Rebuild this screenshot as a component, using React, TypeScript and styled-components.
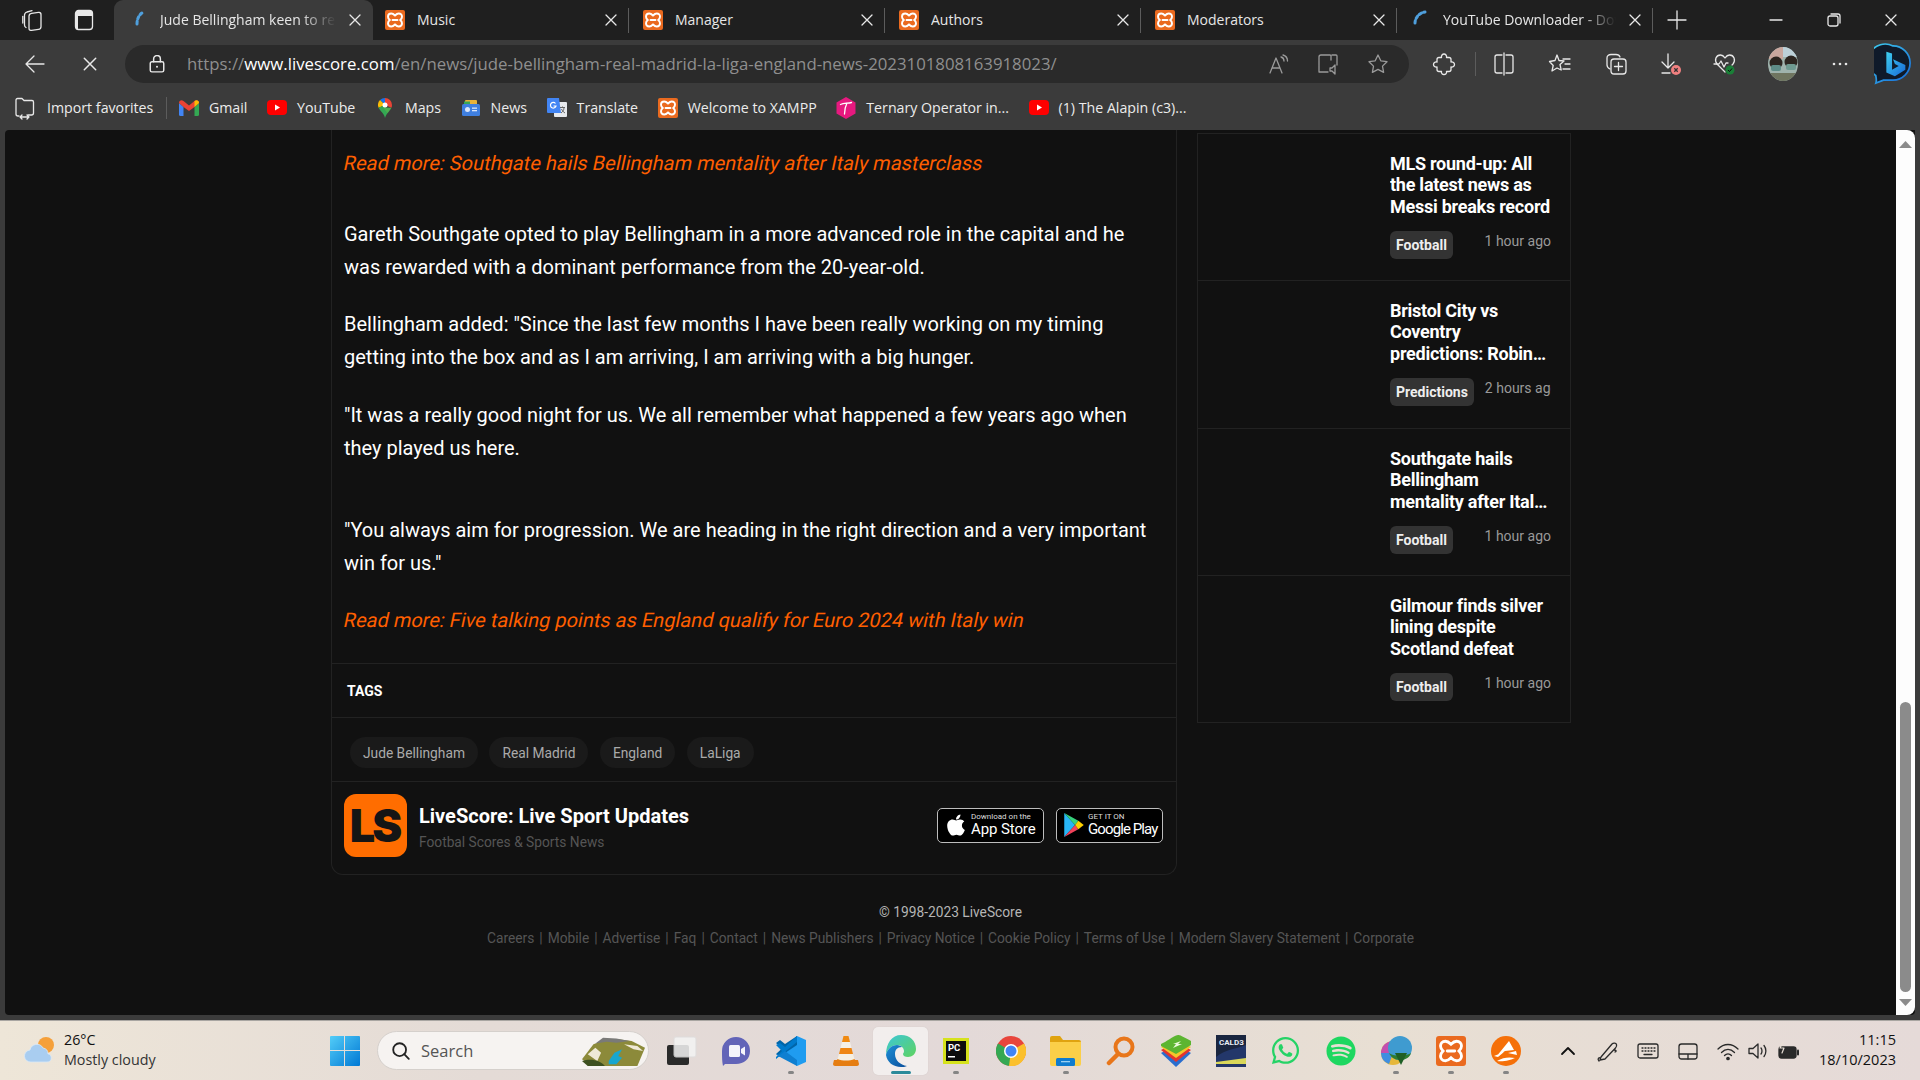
import React from "react";
import styled, { createGlobalStyle, css } from "styled-components";
import { FaApple, FaWhatsapp, FaSpotify } from "react-icons/fa";

const UI = `"Open Sans", "Noto Sans", sans-serif`;
const WEB = `Roboto, "Liberation Sans", sans-serif`;

const Global = createGlobalStyle`
  html, body { margin: 0; padding: 0; height: 100%; overflow: hidden; background: #111; }
  #root { height: 100%; }
  * { box-sizing: border-box; }
  svg { display: block; }
`;

const Screen = styled.div`
  height: 1080px; width: 1920px; display: flex; flex-direction: column; overflow: hidden;
`;

/* ---------- tab strip ---------- */
const TabStrip = styled.div`
  height: 40px; flex: none; display: flex; align-items: stretch; background: #1f1f1f;
  font: 400 14px ${UI}; color: #e6e6e6;
`;
const Leading = styled.div`
  width: 114px; flex: none; display: flex; align-items: center; gap: 28px; padding-left: 20px;
`;
const Tab = styled.div<{ $active?: boolean; $first?: boolean; $w: number }>`
  width: ${(p) => p.$w}px; flex: none; display: flex; align-items: center; gap: 12px;
  padding: 0 11px 0 ${(p) => (p.$first ? 12 : 14)}px; position: relative;
  ${(p) =>
    p.$active
      ? css`background: #3b3b3b; border-radius: 9px 9px 0 0;`
      : css`&::after { content: ""; position: absolute; right: 0; top: 8px; bottom: 7px; width: 1px; background: #5c5c5c; }`}
`;
const TabTitle = styled.span<{ $fade?: boolean }>`
  flex: 1; min-width: 0; overflow: hidden; white-space: nowrap; margin-top: -2px;
  ${(p) => p.$fade && css`-webkit-mask-image: linear-gradient(90deg, #000 80%, transparent 100%); mask-image: linear-gradient(90deg, #000 80%, transparent 100%);`}
`;
const Fav = styled.span`
  width: 20px; height: 20px; flex: none; display: flex; align-items: center; justify-content: center;
`;
const NewTab = styled.div`
  margin-left: 14px; width: 20px; flex: none; display: flex; align-items: center; justify-content: center;
`;
const WindowControls = styled.div`
  margin-left: auto; display: flex; align-items: stretch;
`;
const WinBtn = styled.div`
  width: 57.5px; display: flex; align-items: center; justify-content: center;
`;

/* ---------- toolbar ---------- */
const Toolbar = styled.div`
  height: 45px; flex: none; display: flex; align-items: center; background: #3b3b3b;
  padding: 3px 0 0 19px;
`;
const NavBtn = styled.div`
  width: 32px; height: 32px; flex: none; display: flex; align-items: center; justify-content: center;
  & + & { margin-left: 23px; }
`;
const Address = styled.div`
  margin-left: 19px; width: 1284px; height: 38px; flex: none; border-radius: 19px; background: #2a2a2a;
  display: flex; align-items: center; padding: 0 19px 0 23px;
`;
const Url = styled.div`
  margin: -2px 0 0 21px; flex: 1; font: 400 16.8px ${UI}; color: #8f8f8f; white-space: nowrap;
  strong { font-weight: 400; color: #fff; }
`;
const AddrTools = styled.div`
  display: flex; gap: 26px; align-items: center;
`;
const ToolRow = styled.div`
  flex: 1; display: flex; align-items: center; padding-left: 7px;
`;
const ToolSlot = styled.div<{ $w?: number }>`
  width: ${(p) => p.$w ?? 56}px; flex: none; display: flex; align-items: center; justify-content: center;
`;
const ToolSep = styled.div`
  width: 1px; height: 24px; background: #5c5c5c; margin-left: 3px; flex: none;
`;
const Avatar = styled.div`
  width: 30px; height: 34px; border-radius: 50%; overflow: hidden;
`;

/* ---------- bookmarks ---------- */
const BookmarkBar = styled.div`
  height: 45px; flex: none; display: flex; align-items: center; background: #3b3b3b;
  padding-left: 13px; font: 400 14.2px ${UI}; color: #ececec; white-space: nowrap;
`;
const Bookmark = styled.div`
  display: flex; align-items: center; gap: 10px; margin-right: 19.6px;
`;
const BarSep = styled.div`
  width: 1px; height: 22px; background: #5c5c5c; margin: 0 12px 0 -7px;
`;

/* ---------- page ---------- */
const Viewport = styled.div`
  flex: 1; min-height: 0; display: flex; background: #3b3b3b; padding: 0 5px 5px;
`;
const Page = styled.div`
  flex: 1; display: flex; background: #111; border-radius: 4px 0 4px 4px; overflow: hidden;
`;
const PageBody = styled.div`
  flex: 1; min-width: 0; display: flex; flex-direction: column; font-family: ${WEB};
`;
const Columns = styled.div`
  display: flex; align-items: flex-start; gap: 20px; padding-left: 326px;
`;
const Card = styled.article`
  width: 846px; flex: none; border: 1px solid #222; border-top: 0; border-radius: 0 0 12px 12px;
`;
const Prose = styled.div`
  padding: 17px 13px 26px 12px; color: #fff; font-size: 20px; line-height: 33px;
`;
const Para = styled.p<{ $gap?: number }>`
  margin: ${(p) => p.$gap ?? 24}px 0 0;
`;
const ReadMore = styled.p<{ $gap?: number }>`
  margin: ${(p) => p.$gap ?? 0}px 0 0; color: #ff5f00; transform: skewX(-12deg); transform-origin: left center;
`;
const TagsHead = styled.div`
  height: 55px; display: flex; align-items: center; padding-left: 15px;
  border-top: 1px solid #222; border-bottom: 1px solid #222;
  font-size: 14px; font-weight: 700; color: #fff;
`;
const TagRow = styled.div`
  height: 64px; display: flex; align-items: center; gap: 11.5px; padding: 6px 0 0 18px;
  border-bottom: 1px solid #222;
`;
const TagChip = styled.span`
  height: 31px; display: flex; align-items: center; padding: 0 13px; border-radius: 16px;
  background: #1a1a1a; color: #aaa; font-size: 13.75px;
`;
const AppBar = styled.div`
  height: 92px; display: flex; align-items: center; padding: 0 13px 5px 12px;
`;
const LsLogo = styled.div`
  width: 63px; height: 63px; flex: none; border-radius: 12px; background: #ff6d00; color: #151515;
  display: flex; align-items: center; justify-content: center;
  font: 900 45px/1 Inter, sans-serif; letter-spacing: -3px; padding-right: 2px;
`;
const AppText = styled.div`
  margin-left: 12px; flex: 1; display: flex; flex-direction: column; gap: 5px; padding-top: 4.5px;
`;
const AppName = styled.div`
  font-size: 20px; line-height: 24px; font-weight: 700; color: #fff;
`;
const AppSub = styled.div`
  font-size: 13.75px; line-height: 18px; color: #555;
`;
const Badge = styled.div`
  width: 107px; height: 35px; flex: none; margin-left: 12px; background: #000; border: 1px solid #bdbdbd;
  border-radius: 5px; display: flex; align-items: center; gap: 3px; padding: 0 0 2px 6px; color: #fff;
`;
const BadgeText = styled.div`
  display: flex; flex-direction: column; font-family: ${WEB};
`;
const BadgeSmall = styled.span`
  font-size: 8px; line-height: 9px; color: #ddd; white-space: nowrap;
`;
const BadgeBig = styled.span<{ $track: number }>`
  font-size: 15px; line-height: 16px; font-weight: 400; letter-spacing: ${(p) => p.$track}px; white-space: nowrap;
`;

const Sidebar = styled.aside`
  width: 374px; flex: none; margin-top: 3px; border: 1px solid #222;
`;
const SideItem = styled.div`
  height: 147px; display: flex; padding: 19px 19px 0 0;
  & + & { border-top: 1px solid #222; }
  &:first-child { height: 146px; }
  &:nth-child(2) { height: 148px; }
`;
const ThumbSpace = styled.div`
  width: 192px; flex: none;
`;
const SideText = styled.div`
  flex: 1; min-width: 0;
`;
const SideTitle = styled.h3`
  margin: 0; height: 63px; color: #fff; font-size: 18px; line-height: 21.3px; font-weight: 700; letter-spacing: -0.25px;
  display: -webkit-box; -webkit-line-clamp: 3; -webkit-box-orient: vertical; overflow: hidden;
`;
const MetaRow = styled.div`
  margin-top: 15.4px; display: flex; justify-content: space-between; align-items: flex-start; gap: 11px; overflow: hidden;
`;
const Category = styled.span`
  height: 28px; flex: none; display: flex; align-items: center; padding: 0 6px; border-radius: 6px;
  background: #333; color: #eee; font-size: 14px; font-weight: 700;
`;
const TimeAgo = styled.span`
  flex: none; color: #999; font-size: 14px; line-height: 20px; white-space: nowrap;
`;
const Footer = styled.footer`
  margin-top: 27px; display: flex; flex-direction: column; align-items: center; gap: 6px; font-size: 13.75px; line-height: 20px;
`;
const Copyright = styled.div`color: #b5b5b5;`;
const FootLinks = styled.div`
  color: #555; display: flex; gap: 5px;
`;

/* ---------- scrollbar ---------- */
const Scrollbar = styled.div`
  width: 19px; flex: none; display: flex; flex-direction: column; align-items: center; background: #fdfdfd;
  border-radius: 0 8px 8px 0; padding: 11px 0 9px;
`;
const ScrollTrack = styled.div`
  flex: 1; width: 100%; display: flex; flex-direction: column; align-items: center; justify-content: flex-end; padding-bottom: 7px;
`;
const ScrollThumb = styled.div`
  width: 11px; height: 290px; border-radius: 6px; background: #8b8b8b;
`;

/* ---------- taskbar ---------- */
const Taskbar = styled.div`
  height: 60px; flex: none; display: flex; align-items: center; border-top: 1px solid #a9a6a2;
  background: linear-gradient(90deg, #eee6d8 0%, #e4dbd6 25%, #e3d9d8 50%, #e8dfd3 72%, #e5dad8 100%);
  font-family: ${UI}; color: #222;
`;
const Weather = styled.div`
  width: 317px; flex: none; display: flex; align-items: center; gap: 8px; padding: 0 0 2px 24px;
`;
const WeatherText = styled.div`
  font-size: 14.3px; line-height: 20px; color: #333;
  div:first-child { color: #111; }
`;
const Slot = styled.div<{ $w?: number; $hi?: boolean }>`
  width: ${(p) => p.$w ?? 55}px; height: 48px; flex: none; position: relative; display: flex; align-items: center; justify-content: center;
  border-radius: 5px;
  ${(p) => p.$hi && css`background: rgba(255, 255, 255, 0.55); box-shadow: 0 0 1px rgba(0,0,0,.15);`}
`;
const Indicator = styled.span<{ $on?: boolean }>`
  position: absolute; bottom: 1px; left: 50%; transform: translateX(-50%); height: 3px; border-radius: 2px;
  width: ${(p) => (p.$on ? 20 : 6)}px; background: ${(p) => (p.$on ? "#2b8a9a" : "#858585")};
`;
const SearchBox = styled.div`
  width: 272px; height: 39px; flex: none; margin-left: 5px; border-radius: 20px; background: #f6f3f1; border: 1px solid #d5d0cc;
  display: flex; align-items: center; padding: 0 3px 0 12px; font-size: 16.5px; color: #555;
`;
const SearchLabel = styled.span`
  margin-left: 9px; flex: 1;
`;
const TaskIcons = styled.div`
  display: flex; align-items: center; margin-left: 4px;
`;
const Tray = styled.div`
  display: flex; align-items: center; margin-left: 15px;
`;
const TrayGap = styled.div`width: 5px; flex: none;`;
const Clock = styled.div`
  margin-left: auto; padding: 0 24px 2px 0; text-align: right; font-size: 14.5px; line-height: 20px; color: #111;
`;

/* ---------- icons ---------- */
const sw = { fill: "none", stroke: "#e8e8e8", strokeWidth: 1.3, strokeLinecap: "round" as const, strokeLinejoin: "round" as const };
const dim = { ...sw, stroke: "#9a9a9a" };
const I = ({ s = 20, children, v = 24 }: { s?: number; v?: number; children: React.ReactNode }) => (
  <svg width={s} height={s} viewBox={`0 0 ${v} ${v}`}>{children}</svg>
);
const Close = ({ s = 14 }: { s?: number }) => (
  <I s={s} v={14}><path d="M2 2l10 10M12 2L2 12" {...sw} /></I>
);
const Xampp = ({ s = 20 }: { s?: number }) => (
  <svg width={s} height={s} viewBox="0 0 20 20">
    <rect width="20" height="20" rx="2" fill="#ea6a1f" />
    <path d="M6.300 3.500c-2.200 0-3.300 1.500-3.300 3.200 0 1.300.7 2.300 1.700 3.300-1 1-1.700 2-1.700 3.300 0 1.700 1.100 3.200 3.300 3.200 1.300 0 2.400-.7 3.700-2 1.300 1.300 2.400 2 3.700 2 2.200 0 3.300-1.500 3.300-3.200 0-1.300-.7-2.300-1.700-3.300 1-1 1.700-2 1.700-3.300 0-1.700-1.100-3.200-3.300-3.200-1.300 0-2.400.7-3.700 2-1.300-1.300-2.400-2-3.700-2z" fill="none" stroke="#fff" strokeWidth="1.900" />
    <path d="M7.500 10h5" stroke="#fff" strokeWidth="1.900" strokeLinecap="round" />
  </svg>
);
const Spinner = ({ short }: { short?: boolean }) => (
  <svg width="20" height="20" viewBox="0 0 20 20">
    <path d={short ? "M7 15C7 10 9 6 12 4" : "M3 15C3 10 7 5 13 4"} transform={short ? "translate(2 -1)" : "translate(1 -2)"} fill="none" stroke="#4f9fdc" strokeWidth="3" strokeLinecap="round" strokeDasharray="2.500 2.400" />
  </svg>
);
const YtIcon = () => (
  <svg width="20" height="15" viewBox="0 0 20 15"><rect width="20" height="15" rx="4" fill="#f00" /><path d="M8 4.500l5 3-5 3z" fill="#fff" /></svg>
);
const Gmail = () => (
  <svg width="20" height="16" viewBox="0 0 20 16">
    <path d="M0 3v11.500A1.500 1.500 0 0 0 1.500 16H4.500V7z" fill="#4285f4" />
    <path d="M20 3v11.500a1.500 1.500 0 0 1-1.500 1.500H15.500V7z" fill="#34a853" />
    <path d="M0 3c0-2.500 2.500-3.500 4.500-2L10 5.500 15.500 1c2-1.500 4.500-.5 4.500 2l-4.500 4L10 11 4.500 7z" fill="#ea4335" />
    <path d="M15.500 1C17.500-.5 20 .5 20 3l-4.500 4z" fill="#fbbc04" />
  </svg>
);
const Maps = () => (
  <svg width="14" height="20" viewBox="0 0 14 20">
    <path d="M7 0a7 7 0 0 0-5 2.100L7 7z" fill="#1a73e8" />
    <path d="M7 0a7 7 0 0 1 7 7c0 1-.2 1.900-.6 2.700L7 7z" fill="#ea4335" />
    <path d="M2 2.100A7 7 0 0 0 .6 9.700L7 7z" fill="#fbbc04" />
    <path d="M.6 9.700C2 13 6 15 7 20c.5-2 1.400-3.400 2.500-4.800L7 7z" fill="#34a853" />
    <path d="M13.400 9.700C12.500 11.700 10.800 13.500 9.500 15.200L5 9.500z" fill="#4caf50" />
    <circle cx="7" cy="7" r="2.500" fill="#fff" />
  </svg>
);
const News = () => (
  <svg width="18" height="18" viewBox="0 0 18 18">
    <rect x="3" y="1" width="12" height="6" rx="1" fill="#e8b23a" />
    <rect x="2" y="2.500" width="6" height="5" fill="#3aa757" />
    <rect x="0" y="5" width="18" height="12" rx="1.500" fill="#3f7fe0" />
    <rect x="3" y="8" width="5" height="5" rx="2.500" fill="#dbe7fb" />
    <rect x="10" y="8.500" width="5" height="1.300" fill="#dbe7fb" />
    <rect x="10" y="11" width="5" height="1.300" fill="#dbe7fb" />
  </svg>
);
const Translate = () => (
  <svg width="20" height="20" viewBox="0 0 20 20">
    <rect x="7" y="4" width="13" height="15" rx="1" fill="#e8eaed" />
    <path d="M1 0h11l2 15H1a1 1 0 0 1-1-1V1a1 1 0 0 1 1-1z" fill="#4285f4" />
    <path d="M13 9.500h5M15.500 8.500v1M14 15c2-1.500 3-3 3-5.500M14.500 11c.5 1.500 2 3 3.500 4" stroke="#666" strokeWidth="1" fill="none" />
    <path d="M8.500 5.500A2.800 2.800 0 1 0 9 8H6.500" fill="none" stroke="#fff" strokeWidth="1.200" />
  </svg>
);
const Ternary = () => (
  <svg width="20" height="22" viewBox="0 0 20 22">
    <path d="M10 0l9.500 5.500v11L10 22 .5 16.500v-11z" fill="#e6197f" />
    <path d="M4.500 7.500c3.500-1.500 7-1 11-2M11 6c-1.500 3-2.500 7-2.500 11" stroke="#fff" strokeWidth="1.300" fill="none" strokeLinecap="round" />
  </svg>
);

const WindowsLogo = () => (
  <svg width="30" height="30" viewBox="0 0 30 30">
    <defs><linearGradient id="w" x1="0" y1="0" x2="1" y2="1"><stop offset="0" stopColor="#53cdf8" /><stop offset="1" stopColor="#0078d4" /></linearGradient></defs>
    <path d="M0 1a1 1 0 0 1 1-1h13v14H0zM15 0h14a1 1 0 0 1 1 1v13H15zM0 15h14v15H1a1 1 0 0 1-1-1zM15 15h15v14a1 1 0 0 1-1 1H15z" fill="url(#w)" />
  </svg>
);
const TaskView = () => (
  <svg width="32" height="30" viewBox="0 0 32 30">
    <rect x="2" y="9" width="22" height="20" rx="2" fill="#2a2a2a" />
    <rect x="9" y="1" width="22" height="20" rx="2" fill="#f4f4f4" opacity=".85" stroke="#ddd" />
  </svg>
);
const Meet = () => (
  <svg width="30" height="32" viewBox="0 0 30 32">
    <path d="M15 2a14 14 0 0 1 14 14c0 8-6 13-14 13H4l-2 2c-1-4-1-9-1-15A14 14 0 0 1 15 2z" fill="#6264b8" />
    <rect x="8" y="10" width="11" height="12" rx="1.500" fill="#f4f4fb" />
    <path d="M20 14l4-2.500v9L20 18z" fill="#f4f4fb" />
  </svg>
);
const VsCode = () => (
  <svg width="30" height="30" viewBox="0 0 30 30">
    <path d="M21 0l9 4v22l-9 4-12-13z" fill="#1f9cf0" />
    <path d="M21 0v9L9 17l-5 4-4-3 6-5.500L0 7l4-3 5 4z" fill="#0065a9" />
    <path d="M0 23l21-17v-6L9 11 4 7 0 9l6 6-6 6z" fill="#007acc" />
    <path d="M0 18l4 3 17 9v-6L9 15 4 19z" fill="#0e7fd1" />
  </svg>
);
const Vlc = () => (
  <svg width="26" height="30" viewBox="0 0 26 30">
    <path d="M1 24l-1 4c0 1 1 2 2 2h22c1 0 2-1 2-2l-1-4z" fill="#e57d12" />
    <path d="M10.500 0h5l1.500 6h-8z" fill="#f08a12" />
    <path d="M9 6h8l1.500 6h-11z" fill="#f4f0e8" />
    <path d="M7.500 12h11l1.500 6H6z" fill="#ef8613" />
    <path d="M6 18h14l2 7H4z" fill="#f5efe3" />
    <path d="M4.500 23c5 2 12 2 17 0l1.500 3H3z" fill="#e77e10" />
  </svg>
);
const PyCharm = () => (
  <svg width="26" height="26" viewBox="0 0 26 26">
    <rect width="26" height="26" fill="#d6e21d" />
    <rect x="3" y="3" width="20" height="20" fill="#0d0d0d" />
    <text x="5" y="13" fontSize="9.500" fontWeight="700" fontFamily="Roboto, sans-serif" fill="#fff">PC</text>
    <rect x="5" y="18" width="7" height="1.500" fill="#fff" />
  </svg>
);
const Chrome = () => (
  <svg width="30" height="30" viewBox="0 0 30 30">
    <circle cx="15" cy="15" r="15" fill="#e8453c" />
    <path d="M15 15L2 7.500A15 15 0 0 0 15 30z" fill="#34a853" />
    <path d="M15 15l13-7.500A15 15 0 0 1 13 30z" fill="#fbc02d" />
    <circle cx="15" cy="15" r="7" fill="#fff" />
    <circle cx="15" cy="15" r="5.500" fill="#4285f4" />
  </svg>
);
const Edge = () => (
  <svg width="30" height="32" viewBox="0 0 30 32">
    <defs>
      <linearGradient id="e1" x1="0" y1="0" x2="1" y2="1"><stop offset="0" stopColor="#3bc6d8" /><stop offset="1" stopColor="#5fd35f" /></linearGradient>
      <linearGradient id="e2" x1="0" y1="0" x2="1" y2="1"><stop offset="0" stopColor="#1d8fd6" /><stop offset="1" stopColor="#0b4f9c" /></linearGradient>
    </defs>
    <path d="M15 0c9 0 15 6 15 14 0 5-4 8-8 8-3 0-5-1-5-3 0-1 1-1 1-3 0-3-3-6-7-6-5 0-10 4-11 10C0 8 6 0 15 0z" fill="url(#e1)" />
    <path d="M0 20c1-6 6-10 11-10 2 0 4 1 5 2-5 0-7 3-7 7 0 6 5 11 12 12-2 1-4 1-6 1C7 32 1 27 0 20z" fill="url(#e2)" />
  </svg>
);
const Folder = () => (
  <svg width="31" height="30" viewBox="0 0 31 30">
    <path d="M0 2a2 2 0 0 1 2-2h8l3 4h16a2 2 0 0 1 2 2v3H0z" fill="#e0a30f" />
    <path d="M0 6h31v22a2 2 0 0 1-2 2H2a2 2 0 0 1-2-2z" fill="#fbcf48" />
    <rect x="6" y="22" width="19" height="8" rx="1.500" fill="#0f7ccf" />
    <rect x="11" y="25" width="9" height="1.300" fill="#9ad0f2" />
  </svg>
);
const Magnifier = () => (
  <svg width="30" height="30" viewBox="0 0 30 30">
    <circle cx="18" cy="11" r="8.500" fill="none" stroke="#e8761a" strokeWidth="4" />
    <path d="M12 18L3 27" stroke="#e8761a" strokeWidth="4.500" strokeLinecap="round" />
  </svg>
);
const Bluestacks = () => (
  <svg width="30" height="32" viewBox="0 0 30 32">
    <path d="M15 10l15 8-15 14L0 18z" fill="#2a6ecf" />
    <path d="M15 7l15 8-15 12L0 15z" fill="#e3352f" />
    <path d="M15 4l15 8-15 11L0 12z" fill="#f6c52b" />
    <path d="M17 0c2 0 4 1 13 6v4L15 19 0 11V9c5-2 12-8 17-9z" fill="#5cb531" />
    <path d="M12 9l8-3-3 3h4l-9 4 3-4z" fill="#eaf8da" />
  </svg>
);
const Cald = () => (
  <svg width="30" height="32" viewBox="0 0 30 32">
    <rect width="30" height="32" fill="#1a2640" />
    <path d="M0 22c10-8 20-8 30-12v22H0z" fill="#23376a" />
    <path d="M0 27l30-4v6H0z" fill="#d9d75a" />
    <text x="3" y="10" fontSize="8" fontWeight="700" fontFamily="Roboto, sans-serif" fill="#e8ecf4">CALD3</text>
  </svg>
);
const Idm = () => (
  <svg width="34" height="32" viewBox="0 0 34 32">
    <circle cx="14" cy="18" r="12" fill="#e6b73a" />
    <path d="M2 18a12 12 0 0 1 12-12v12z" fill="#c34fb0" />
    <path d="M2 18a12 12 0 0 0 8 11l4-11z" fill="#3f8ee0" />
    <circle cx="21" cy="13" r="12" fill="#3f9bd0" />
    <path d="M10 18c3 3 16 4 22 0-1 4-5 7-11 7s-9-3-11-7z" fill="#2e7d32" />
    <path d="M16 18h12l-6 12z" fill="#1f5f25" />
  </svg>
);
const Avast = () => (
  <svg width="30" height="30" viewBox="0 0 30 30">
    <circle cx="15" cy="15" r="15" fill="#f57009" />
    <path d="M5 21L18 5l5 9-9 1zM3 20l10-4-6 5zM17 17l8-2 1 4z" fill="#fff" />
    <path d="M6 25c6-4 13-4 18-3-4 2-12 4-18 3z" fill="#fff" />
  </svg>
);
const WeatherIcon = () => (
  <svg width="32" height="28" viewBox="0 0 32 28">
    <circle cx="22" cy="9" r="8" fill="#f5a03a" />
    <path d="M7 26a6 6 0 0 1-1-12 7 7 0 0 1 13-2 6 6 0 0 1 5 6c4 0 5 8-1 8z" fill="#a9cdf0" stroke="#d8e8f7" strokeWidth=".8" />
  </svg>
);
const Mountain = () => (
  <svg width="63" height="30" viewBox="0 0 66 36" preserveAspectRatio="none">
    <path d="M0 28L12 10l14-6 12 0 14 2 14 8-8 22H10z" fill="#8c8a3a" />
    <path d="M14 9l8-7 14 1 14 3-14 2-10-1z" fill="#7a7a78" />
    <path d="M6 22l8-8 6 6-4 10zM44 10l14 2 6 6-10-2z" fill="#efe9d6" />
    <path d="M28 30l6-10 8-4-4 8 4 2-6 8h-8z" fill="#17a6cf" />
    <path d="M0 30c10-4 20 0 24 6H6z" fill="#3d5020" />
  </svg>
);
const Bing = () => (
  <svg width="38" height="42" viewBox="0 0 40 42">
    <defs><linearGradient id="b" x1="0" y1="0" x2="1" y2="1"><stop offset="0" stopColor="#3fd0f0" /><stop offset="1" stopColor="#1668d8" /></linearGradient></defs>
    <path d="M20 2a18 18 0 0 1 0 36H10l-8 3c1-3 .5-4-.2-8A18 18 0 0 1 20 2z" fill="#0f1a2a" stroke="url(#b)" strokeWidth="1.800" />
    <path d="M13 8l6 2v17l7-4-4-2-2-5 13 6v5l-11 7-9-4z" fill="url(#b)" />
  </svg>
);
const TrayIcon = ({ children, w = 24 }: { children: React.ReactNode; w?: number }) => (
  <svg width={w} height="24" viewBox={`0 0 ${w} 24`} fill="none" stroke="#2a2a2a" strokeWidth="1.300" strokeLinecap="round" strokeLinejoin="round">{children}</svg>
);

const tabs = [
  { t: "Music" }, { t: "Manager" }, { t: "Authors" }, { t: "Moderators" },
];
const marks: [string, React.ReactNode][] = [
  ["Gmail", <Gmail />], ["YouTube", <YtIcon />], ["Maps", <Fav><Maps /></Fav>], ["News", <Fav><News /></Fav>],
  ["Translate", <Translate />], ["Welcome to XAMPP", <Xampp />], ["Ternary Operator in...", <Ternary />], ["(1) The Alapin (c3)...", <YtIcon />],
];
const side = [
  { t: "MLS round-up: All the latest news as Messi breaks record", c: "Football", a: "1 hour ago" },
  { t: "Bristol City vs Coventry predictions: Robins to edge it at Ashton Gate", c: "Predictions", a: "2 hours ago" },
  { t: "Southgate hails Bellingham mentality after Italy masterclass", c: "Football", a: "1 hour ago" },
  { t: "Gilmour finds silver lining despite Scotland defeat", c: "Football", a: "1 hour ago" },
];
const links = ["Careers", "Mobile", "Advertise", "Faq", "Contact", "News Publishers", "Privacy Notice", "Cookie Policy", "Terms of Use", "Modern Slavery Statement", "Corporate"];
const apps: [React.ReactNode, boolean?, boolean?][] = [
  [<Meet />], [<VsCode />, true], [<Vlc />], [<Edge />, true, true], [<PyCharm />, true], [<Chrome />], [<Folder />, true], [<Magnifier />],
  [<Bluestacks />], [<Cald />], [<FaWhatsapp size={31} color="#25d366" />], [<FaSpotify size={30} color="#1ed760" />], [<Idm />, true], [<Xampp s={30} />, true], [<Avast />, true],
];

export default function App() {
  return (
    <Screen>
      <Global />
      <TabStrip>
        <Leading>
          <I s={24}>
            <rect x="9" y="5" width="12" height="17" rx="2.500" transform="skewY(-8) translate(0 2)" {...sw} />
            <path d="M6 19.500C5 19 4.500 18 4.500 17V7c0-1.500 1-2.500 2.500-3l5-1.300" {...sw} />
            <path d="M2.800 15V8.500" {...sw} />
          </I>
          <I s={24}><rect x="3.500" y="2.500" width="17" height="19" rx="3" {...sw} /><path d="M4 3h16v5H6v13H4z" fill="#e8e8e8" /></I>
        </Leading>
        <Tab $active $w={259}>
          <Fav><Spinner short /></Fav>
          <TabTitle $fade>Jude Bellingham keen to reach new heights</TabTitle>
          <Close />
        </Tab>
        {tabs.map((x, i) => (
          <Tab key={x.t} $w={256} $first={i === 0}>
            <Fav><Xampp /></Fav>
            <TabTitle>{x.t}</TabTitle>
            <Close />
          </Tab>
        ))}
        <Tab $w={256}>
          <Fav><Spinner /></Fav>
          <TabTitle $fade>YouTube Downloader - Download</TabTitle>
          <Close />
        </Tab>
        <NewTab><I s={20} v={20}><path d="M10 1v18M1 10h18" {...sw} /></I></NewTab>
        <WindowControls>
          <WinBtn><I s={14} v={14}><path d="M1 7h12" {...sw} /></I></WinBtn>
          <WinBtn><I s={14} v={14}><rect x="1" y="3" width="10" height="10" rx="2" {...sw} /><path d="M4 1h7a2 2 0 0 1 2 2v7" {...sw} /></I></WinBtn>
          <WinBtn><Close /></WinBtn>
        </WindowControls>
      </TabStrip>

      <Toolbar>
        <NavBtn><I s={22} v={22}><path d="M20 11H2M10 3l-8 8 8 8" {...sw} /></I></NavBtn>
        <NavBtn><Close s={16} /></NavBtn>
        <Address>
          <I s={18} v={16}><rect x="2" y="6" width="12" height="9" rx="1.500" {...sw} /><path d="M5 6V3.500a3 3 0 0 1 6 0V6" {...sw} /><circle cx="8" cy="10.500" r=".9" fill="#e8e8e8" /></I>
          <Url>https://<strong>www.livescore.com</strong>/en/news/jude-bellingham-real-madrid-la-liga-england-news-2023101808163918023/</Url>
          <AddrTools>
            <I s={24}><path d="M4 21l6-15 6 15M6 16h8" {...dim} /><path d="M15 5c2 .5 3 2 3 4M17 3c3 .8 4.500 3 4.500 6" {...dim} /></I>
            <I s={24}><path d="M5 3h9a1 1 0 0 1 1 1v4M3 5v15h9M3 5a2 2 0 0 1 2-2M16 3h4a1 1 0 0 1 1 1v9" {...dim} /><path d="M14 16h2l3-3v9l-3-3h-2z" {...dim} /></I>
            <I s={24}><path d="M12 3l2.800 5.800 6.200.9-4.500 4.400 1.100 6.300-5.600-3-5.600 3 1.100-6.300L3 9.700l6.200-.9z" {...dim} /></I>
          </AddrTools>
        </Address>
        <ToolRow>
          <ToolSlot><I s={24}><path d="M9.500 5.500C9 3.500 10.500 2 12 2s3 1.500 2.500 3.500H17c1 0 2 1 2 2v2.500c2-.5 3.500 1 3.500 2.500S21 15.500 19 15v2.500c0 1-1 2-2 2h-2.500c.5 2-1 3-2.500 3s-3-1-2.500-3H7c-1 0-2-1-2-2V15c-2 .5-3.500-1-3.500-2.500S3 9.500 5 10V7.500c0-1 1-2 2-2z" {...sw} /></I></ToolSlot>
          <ToolSep />
          <ToolSlot><I s={24}><path d="M10 3H5a2 2 0 0 0-2 2v14a2 2 0 0 0 2 2h5M14 3h5a2 2 0 0 1 2 2v14a2 2 0 0 1-2 2h-5M12 1v22" {...sw} /></I></ToolSlot>
          <ToolSlot><I s={24}><path d="M9 3l2 5.500 5 .5-4 3.500 1.200 5.500L9 16 4 19l1.200-5.500L1.500 9.500 7 8.500z" {...sw} /><path d="M15 7h7M17 12h5M15 17h7" {...sw} /></I></ToolSlot>
          <ToolSlot><I s={24}><path d="M6 17c-2-1-3-2.500-3-4V6c0-2 1.500-3.500 4-3.500h5c2 0 3.500.8 4 2.500" {...sw} /><rect x="7" y="7" width="15" height="15" rx="3" {...sw} /><path d="M14.500 10.500v8M10.500 14.500h8" {...sw} /></I></ToolSlot>
          <ToolSlot $w={52}>
            <I s={24}>
              <path d="M10 2v14M4 10l6 6 6-6M4 21h8" {...sw} />
              <circle cx="18" cy="18" r="5" fill="#f08080" />
              <path d="M16.300 16.300l3.400 3.400M19.700 16.300l-3.400 3.400" stroke="#333" strokeWidth="1.300" />
            </I>
          </ToolSlot>
          <ToolSlot $w={58}>
            <I s={24}>
              <path d="M12 20L4 12C1 8 3 3 7.500 3 9.500 3 11 4.500 12 6c1-1.500 2.500-3 4.500-3C21 3 23 8 20 12l-1 1" {...sw} />
              <path d="M1 12h5l2-3 3 6 2-4h2" {...sw} />
              <circle cx="17" cy="18" r="4.500" fill="#1a7f37" />
              <path d="M15 18l1.500 1.500 2.500-3" stroke="#0d0d0d" strokeWidth="1" fill="none" />
            </I>
          </ToolSlot>
          <ToolSlot $w={58}>
            <Avatar>
              <svg width="30" height="34" viewBox="0 0 30 34">
                <rect width="30" height="34" fill="#9fb3ad" />
                <rect width="15" height="12" fill="#c9a79e" />
                <rect x="15" width="15" height="10" fill="#bcd0d8" />
                <circle cx="8" cy="16" r="6.500" fill="#2c2520" />
                <circle cx="23" cy="15" r="6.500" fill="#2c2520" />
                <rect x="3" y="18" width="10" height="6" rx="2" fill="#5f8c86" />
                <rect x="18" y="17" width="10" height="6" rx="2" fill="#6f9a90" />
                <rect x="0" y="26" width="30" height="8" fill="#6f7560" />
              </svg>
            </Avatar>
          </ToolSlot>
          <ToolSlot><I s={20} v={20}><circle cx="4" cy="10" r="1.300" fill="#e8e8e8" /><circle cx="10" cy="10" r="1.300" fill="#e8e8e8" /><circle cx="16" cy="10" r="1.300" fill="#e8e8e8" /></I></ToolSlot>
          <ToolSlot $w={50}><Bing /></ToolSlot>
        </ToolRow>
      </Toolbar>

      <BookmarkBar>
        <Bookmark>
          <I s={24}><path d="M3 18V4a1.500 1.500 0 0 1 1.500-1.500H9l2 2h8a1.500 1.500 0 0 1 1.500 1.500v11a2 2 0 0 1-2 2H15M3 18a2 2 0 0 0 2 2h1" {...sw} /><path d="M7 21h9M9 19l-2 2 2 2M14 19l2 2-2 2" {...sw} /></I>
          Import favorites
        </Bookmark>
        <BarSep />
        {marks.map(([t, icon]) => (
          <Bookmark key={t}>{icon}{t}</Bookmark>
        ))}
      </BookmarkBar>

      <Viewport>
        <Page>
          <PageBody>
            <Columns>
              <Card>
                <Prose>
                  <ReadMore>Read more: Southgate hails Bellingham mentality after Italy masterclass</ReadMore>
                  <Para $gap={38}>Gareth Southgate opted to play Bellingham in a more advanced role in the capital and he was rewarded with a dominant performance from the 20-year-old.</Para>
                  <Para>Bellingham added: "Since the last few months I have been really working on my timing getting into the box and as I am arriving, I am arriving with a big hunger.</Para>
                  <Para $gap={25}>"It was a really good night for us. We all remember what happened a few years ago when they played us here.</Para>
                  <Para $gap={48.5}>"You always aim for progression. We are heading in the right direction and a very important win for us."</Para>
                  <ReadMore $gap={24.5}>Read more: Five talking points as England qualify for Euro 2024 with Italy win</ReadMore>
                </Prose>
                <TagsHead>TAGS</TagsHead>
                <TagRow>
                  {["Jude Bellingham", "Real Madrid", "England", "LaLiga"].map((t) => <TagChip key={t}>{t}</TagChip>)}
                </TagRow>
                <AppBar>
                  <LsLogo>LS</LsLogo>
                  <AppText>
                    <AppName>LiveScore: Live Sport Updates</AppName>
                    <AppSub>Footbal Scores &amp; Sports News</AppSub>
                  </AppText>
                  <Badge>
                    <FaApple size={24} color="#fff" />
                    <BadgeText><BadgeSmall>Download on the</BadgeSmall><BadgeBig $track={-0.1}>App Store</BadgeBig></BadgeText>
                  </Badge>
                  <Badge>
                    <svg width="22" height="26" viewBox="0 0 20 24">
                      <path d="M1 1l10 11L1 23z" fill="#28b5f5" />
                      <path d="M1 1l13 7-3 4z" fill="#36d17c" />
                      <path d="M1 23l13-7-3-4z" fill="#f2425a" />
                      <path d="M14 8l5 4-5 4-3-4z" fill="#fdd000" />
                    </svg>
                    <BadgeText><BadgeSmall>GET IT ON</BadgeSmall><BadgeBig $track={-0.9}>Google Play</BadgeBig></BadgeText>
                  </Badge>
                </AppBar>
              </Card>
              <Sidebar>
                {side.map((s) => (
                  <SideItem key={s.t}>
                    <ThumbSpace />
                    <SideText>
                      <SideTitle>{s.t}</SideTitle>
                      <MetaRow>
                        <Category>{s.c}</Category>
                        <TimeAgo>{s.a}</TimeAgo>
                      </MetaRow>
                    </SideText>
                  </SideItem>
                ))}
              </Sidebar>
            </Columns>
            <Footer>
              <Copyright>© 1998-2023 LiveScore</Copyright>
              <FootLinks>
                {links.map((l, i) => (
                  <React.Fragment key={l}>{i > 0 && <span>|</span>}<span>{l}</span></React.Fragment>
                ))}
              </FootLinks>
            </Footer>
          </PageBody>
          <Scrollbar>
            <svg width="13" height="7" viewBox="0 0 13 7"><path d="M6.500 0L13 7H0z" fill="#8b8b8b" /></svg>
            <ScrollTrack><ScrollThumb /></ScrollTrack>
            <svg width="13" height="7" viewBox="0 0 13 7"><path d="M6.500 7L13 0H0z" fill="#8b8b8b" /></svg>
          </Scrollbar>
        </Page>
      </Viewport>

      <Taskbar>
        <Weather>
          <WeatherIcon />
          <WeatherText><div>26°C</div><div>Mostly cloudy</div></WeatherText>
        </Weather>
        <Slot><WindowsLogo /></Slot>
        <SearchBox>
          <I s={22}><circle cx="10.500" cy="10.500" r="7" fill="none" stroke="#222" strokeWidth="2" /><path d="M15.500 15.500l5 5" stroke="#222" strokeWidth="2" strokeLinecap="round" /></I>
          <SearchLabel>Search</SearchLabel>
          <Mountain />
        </SearchBox>
        <TaskIcons>
          <Slot><TaskView /></Slot>
          {apps.map(([icon, dot, on], i) => (
            <Slot key={i} $hi={on} $w={55}>{icon}{dot && <Indicator $on={on} />}</Slot>
          ))}
        </TaskIcons>
        <Tray>
          <Slot $w={40}><TrayIcon><path d="M6 15l6-6 6 6" strokeWidth="1.800" stroke="#111" /></TrayIcon></Slot>
          <Slot $w={40}><TrayIcon><path d="M4 21l1-3L16 5c1.500-1.500 4-1 4.500.5s0 2.500-1 3.500L9 20zM3 22c-2-2 0-4 1-3M18 11c2 0 3 1 1 2" /></TrayIcon></Slot>
          <Slot $w={40}><TrayIcon w={22}><rect x="1" y="5" width="20" height="14" rx="2" /><path d="M5 9h1M8 9h1M11 9h1M14 9h1M17 9h1M5 12h1M8 12h1M11 12h1M14 12h1M17 12h1M7 15.500h8" /></TrayIcon></Slot>
          <Slot $w={40}><TrayIcon w={20}><rect x="1" y="5" width="18" height="15" rx="2.500" /><path d="M1 15h18M10 15v5" /></TrayIcon></Slot>
          <TrayGap />
          <Slot $w={30}><TrayIcon><path d="M2 10c6-6 14-6 20 0M5.500 13.500c4-4 9-4 13 0M8.500 16.500c2-2 5-2 7 0" /><circle cx="12" cy="19.500" r="1.200" fill="#2a2a2a" /></TrayIcon></Slot>
          <Slot $w={30}><TrayIcon><path d="M3 9.500h4l5-4.500v14l-5-4.500H3zM15 9c1.300 1.500 1.300 4.500 0 6M18 6.500c2.500 3 2.500 8 0 11" /></TrayIcon></Slot>
          <Slot $w={30}><TrayIcon><rect x="3" y="8" width="17" height="11" rx="2.500" fill="#2a2a2a" /><path d="M22 11.500v4" strokeWidth="2" /><path d="M7 3l-3 6h4l-2 5" stroke="#e8dfd6" strokeWidth="1.200" /></TrayIcon></Slot>
        </Tray>
        <Clock><div>11:15</div><div>18/10/2023</div></Clock>
      </Taskbar>
    </Screen>
  );
}
